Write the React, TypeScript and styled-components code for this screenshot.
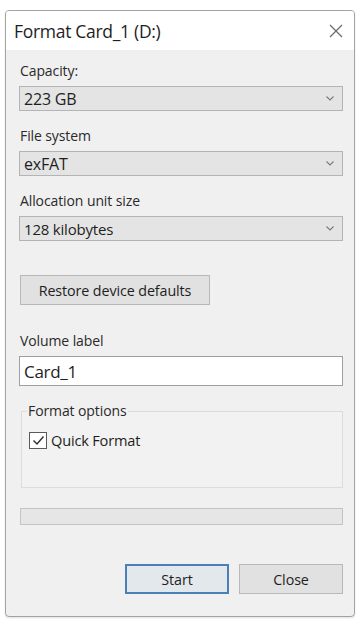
import React from "react";
import styled, { createGlobalStyle } from "styled-components";

const Global = createGlobalStyle`
  html, body { margin: 0; padding: 0; background: #ffffff; }
  body { font-family: "Open Sans", "Noto Sans", "Liberation Sans", sans-serif; color: #1a1a1a; }
  * { box-sizing: border-box; }
`;

const Page = styled.div`
  width: 359px;
  height: 620px;
  padding: 10px 4px 3px 5px;
`;

const Window = styled.div`
  width: 350px;
  height: 607px;
  border: 1px solid #a3a3a3;
  border-radius: 4px;
  background: #f0f0f0;
  display: flex;
  flex-direction: column;
  overflow: hidden;
  box-shadow: 0 1px 2px rgba(0, 0, 0, 0.12);
`;

const TitleBar = styled.div`
  height: 39px;
  background: #ffffff;
  display: flex;
  align-items: center;
  justify-content: space-between;
  padding: 0 10px 0 8px;
  flex-shrink: 0;
`;

const Title = styled.div`
  font-size: 17.5px;
  color: #1e1e1e;
  letter-spacing: -0.3px;
`;

const CloseIcon = styled.svg`
  width: 16px;
  height: 16px;
  display: block;
`;

const Body = styled.div`
  flex: 1;
  display: flex;
  flex-direction: column;
  padding: 12px 11px 0 13px;
`;

const Label = styled.div<{ $gap?: number }>`
  font-size: 14px;
  line-height: 18px;
  color: #2a2a2a;
  margin-top: ${(p) => p.$gap ?? 0}px;
  margin-bottom: 6px;
  padding-left: 1px;
  letter-spacing: -0.1px;
`;

const Select = styled.div`
  height: 25px;
  background: #e4e4e4;
  border: 1px solid #b4b4b4;
  display: flex;
  align-items: center;
  justify-content: space-between;
  padding: 0 8px 0 4px;
  color: #1e1e1e;
`;

const Value = styled.span<{ $size: number }>`
  font-size: ${(p) => p.$size}px;
  letter-spacing: -0.2px;
`;

const Chevron = styled.svg`
  width: 8px;
  height: 5px;
  display: block;
`;

const Button = styled.div<{ $primary?: boolean; $width: number }>`
  width: ${(p) => p.$width}px;
  height: 30px;
  display: flex;
  align-items: center;
  justify-content: center;
  font-size: 14.3px;
  letter-spacing: -0.1px;
  color: #1e1e1e;
  background: ${(p) => (p.$primary ? "#e3e8ed" : "#e1e1e1")};
  border: ${(p) => (p.$primary ? "2px solid #4a7fb8" : "1px solid #b8b8b8")};
`;

const RestoreRow = styled.div`
  margin-top: 34px;
  padding-left: 1px;
`;

const TextInput = styled.div`
  height: 30px;
  background: #ffffff;
  border: 1px solid #9f9f9f;
  display: flex;
  align-items: center;
  padding: 0 4px;
  font-size: 17px;
  letter-spacing: -0.3px;
  color: #1e1e1e;
`;

const Group = styled.fieldset`
  margin: 16px 0 0 2px;
  padding: 4px 8px 0 7px;
  height: 86px;
  border: 1px solid #dcdcdc;
  border-radius: 0;
  background: #f2f2f2;
`;

const Legend = styled.legend`
  font-size: 14px;
  color: #2a2a2a;
  padding: 0 1px;
  margin-left: -2px;
  line-height: 18px;
  letter-spacing: -0.1px;
`;

const CheckRow = styled.label`
  display: flex;
  align-items: center;
  gap: 4px;
  font-size: 14.6px;
  letter-spacing: -0.2px;
  color: #1e1e1e;
  margin-top: 6px;
`;

const Box = styled.span`
  width: 18px;
  height: 17px;
  border: 1px solid #5a5a5a;
  background: #ffffff;
  display: flex;
  align-items: center;
  justify-content: center;
`;

const Progress = styled.div`
  margin-top: 20px;
  margin-left: 1px;
  height: 17px;
  border: 1px solid #c4c4c4;
  background: #e6e6e6;
`;

const Footer = styled.div`
  margin-top: 39px;
  display: flex;
  justify-content: flex-end;
  gap: 10px;
`;

const chevron = (
  <Chevron viewBox="0 0 8 5">
    <path d="M0.5 0.5 L4 4 L7.5 0.5" stroke="#7a7a7a" strokeWidth="1.1" fill="none" />
  </Chevron>
);

export default function App() {
  return (
    <>
      <Global />
      <Page>
        <Window>
          <TitleBar>
            <Title>Format Card_1 (D:)</Title>
            <CloseIcon viewBox="0 0 16 16">
              <path d="M2 2 L14 14 M14 2 L2 14" stroke="#6a6a6a" strokeWidth="1.3" fill="none" />
            </CloseIcon>
          </TitleBar>
          <Body>
            <Label>Capacity:</Label>
            <Select>
              <Value $size={16}>223 GB</Value>
              {chevron}
            </Select>
            <Label $gap={16}>File system</Label>
            <Select>
              <Value $size={16}>exFAT</Value>
              {chevron}
            </Select>
            <Label $gap={16}>Allocation unit size</Label>
            <Select>
              <Value $size={15}>128 kilobytes</Value>
              {chevron}
            </Select>
            <RestoreRow>
              <Button $width={190}>Restore device defaults</Button>
            </RestoreRow>
            <Label $gap={27}>Volume label</Label>
            <TextInput>Card_1</TextInput>
            <Group>
              <Legend>Format options</Legend>
              <CheckRow>
                <Box>
                  <svg width="13" height="11" viewBox="0 0 13 11">
                    <path d="M1.5 5.5 L5 9 L11.5 1.5" stroke="#333" strokeWidth="1.5" fill="none" />
                  </svg>
                </Box>
                Quick Format
              </CheckRow>
            </Group>
            <Progress />
            <Footer>
              <Button $primary $width={104}>Start</Button>
              <Button $width={104}>Close</Button>
            </Footer>
          </Body>
        </Window>
      </Page>
    </>
  );
}
